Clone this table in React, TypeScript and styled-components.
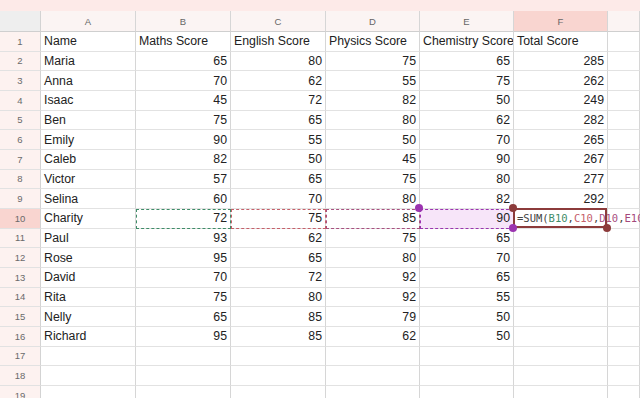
import React from 'react';
import styled, { createGlobalStyle, css } from 'styled-components';

const GlobalStyle = createGlobalStyle`
  html, body {
    margin: 0;
    padding: 0;
    background: #ffffff;
    overflow: hidden;
  }
  body {
    font-family: "Liberation Sans", Arial, sans-serif;
  }
`;

const Page = styled.div`
  width: 640px;
  height: 398px;
  overflow: hidden;
  background: #ffffff;
`;

const TopStrip = styled.div`
  height: 11px;
  background: #fdeae8;
`;

const Grid = styled.div`
  display: grid;
  grid-template-columns: 41px 95px 95px 95px 94px 94px 94px 1fr;
  grid-template-rows: 21px;
  grid-auto-rows: 19.67px;
`;

const Corner = styled.div`
  background: #eeeeee;
  border-right: 1px solid #d3d3d3;
  border-bottom: 1px solid #cfcfcf;
`;

const ColHeader = styled.div<{ $active?: boolean }>`
  display: flex;
  align-items: center;
  justify-content: center;
  font-size: 9.5px;
  color: #666666;
  background: ${(p) => (p.$active ? '#f9d5d0' : '#fbf4f3')};
  border-right: 1px solid #d6d6d6;
  border-bottom: 1px solid #cfcfcf;
`;

const RowHeader = styled.div<{ $active?: boolean }>`
  display: flex;
  align-items: center;
  justify-content: center;
  font-size: 9.5px;
  color: #6a6a6a;
  background: ${(p) => (p.$active ? '#f9d5d0' : '#fdf2f0')};
  border-right: 1px solid #d3d3d3;
  border-bottom: 1px solid #e2e2e2;
`;

const Cell = styled.div<{ $num?: boolean; $range?: string; $fill?: string }>`
  position: relative;
  display: flex;
  align-items: center;
  justify-content: ${(p) => (p.$num ? 'flex-end' : 'flex-start')};
  padding: 0 3px;
  box-sizing: border-box;
  min-width: 0;
  overflow: ${(p) => (p.$range ? 'visible' : 'hidden')};
  white-space: nowrap;
  font-size: 12.3px;
  color: #222222;
  background: ${(p) => p.$fill ?? 'transparent'};
  border-right: 1px solid #d6d6d6;
  border-bottom: 1px solid #e2e2e2;
  ${(p) =>
    p.$range &&
    css`
      outline: 1px dashed ${p.$range};
      outline-offset: -1px;
    `}
`;

const EditCell = styled.div`
  position: relative;
  z-index: 2;
  border-right: 1px solid #d6d6d6;
  border-bottom: 1px solid #e2e2e2;
`;

const EditFrame = styled.div`
  position: absolute;
  inset: -1px 0 0 -1px;
  border: 2px solid #8c3b3b;
  pointer-events: none;
  z-index: 3;
`;

const Formula = styled.div`
  position: absolute;
  left: 3px;
  top: 0;
  bottom: 0;
  display: flex;
  align-items: center;
  white-space: nowrap;
  font-family: "DejaVu Sans Mono", "Liberation Mono", monospace;
  font-size: 10.5px;
  color: #444444;
`;

const Ref = styled.span<{ $color: string }>`
  color: ${(p) => p.$color};
`;

const Dot = styled.span<{ $color: string; $pos: 'tl' | 'br' }>`
  position: absolute;
  width: 8px;
  height: 8px;
  border-radius: 50%;
  background: ${(p) => p.$color};
  z-index: 4;
  ${(p) =>
    p.$pos === 'tl'
      ? css`
          top: -5px;
          left: -5px;
        `
      : css`
          bottom: -4px;
          right: -4px;
        `}
`;

const cols = ['A', 'B', 'C', 'D', 'E', 'F'];

const headers = ['Name', 'Maths Score', 'English Score', 'Physics Score', 'Chemistry Score', 'Total Score'];

const rows: (string | number | null)[][] = [
  ['Maria', 65, 80, 75, 65, 285],
  ['Anna', 70, 62, 55, 75, 262],
  ['Isaac', 45, 72, 82, 50, 249],
  ['Ben', 75, 65, 80, 62, 282],
  ['Emily', 90, 55, 50, 70, 265],
  ['Caleb', 82, 50, 45, 90, 267],
  ['Victor', 57, 65, 75, 80, 277],
  ['Selina', 60, 70, 80, 82, 292],
  ['Charity', 72, 75, 85, 90, null],
  ['Paul', 93, 62, 75, 65, null],
  ['Rose', 95, 65, 80, 70, null],
  ['David', 70, 72, 92, 65, null],
  ['Rita', 75, 80, 92, 55, null],
  ['Nelly', 65, 85, 79, 50, null],
  ['Richard', 95, 85, 62, 50, null],
  [null, null, null, null, null, null],
  [null, null, null, null, null, null],
  [null, null, null, null, null, null],
];

// formula references in the active row
const refColors: Record<number, string> = {
  1: '#3f8c68',
  2: '#c5606a',
  3: '#a8507f',
  4: '#9b34b0',
};

const App: React.FC = () => {
  return (
    <Page>
      <GlobalStyle />
      <TopStrip />
      <Grid>
        <Corner />
        {cols.map((c) => (
          <ColHeader key={c} $active={c === 'F'}>
            {c}
          </ColHeader>
        ))}
        <ColHeader />

        <RowHeader>1</RowHeader>
        {headers.map((h) => (
          <Cell key={h}>{h}</Cell>
        ))}
        <Cell />

        {rows.map((row, i) => {
          const rowNum = i + 2;
          const active = rowNum === 10;
          return (
            <React.Fragment key={rowNum}>
              <RowHeader $active={active}>{rowNum}</RowHeader>
              {row.map((v, j) => {
                if (active && j === 5) {
                  return (
                    <EditCell key={j}>
                      <Formula>
                        =SUM(<Ref $color="#3f8c68">B10</Ref>,<Ref $color="#c5606a">C10</Ref>,
                        <Ref $color="#a8507f">D10</Ref>,<Ref $color="#a4487a">E10</Ref>
                      </Formula>
                      <EditFrame />
                      <Dot $color="#8c3b3b" $pos="tl" />
                      <Dot $color="#8c3b3b" $pos="br" />
                    </EditCell>
                  );
                }
                const range = active ? refColors[j] : undefined;
                return (
                  <Cell
                    key={j}
                    $num={typeof v === 'number'}
                    $range={range}
                    $fill={active && j === 4 ? '#f7e5f9' : undefined}
                  >
                    {v}
                    {active && j === 4 && (
                      <>
                        <Dot $color="#9b34b0" $pos="tl" />
                        <Dot $color="#9b34b0" $pos="br" />
                      </>
                    )}
                  </Cell>
                );
              })}
              <Cell />
            </React.Fragment>
          );
        })}
      </Grid>
    </Page>
  );
};

export default App;
